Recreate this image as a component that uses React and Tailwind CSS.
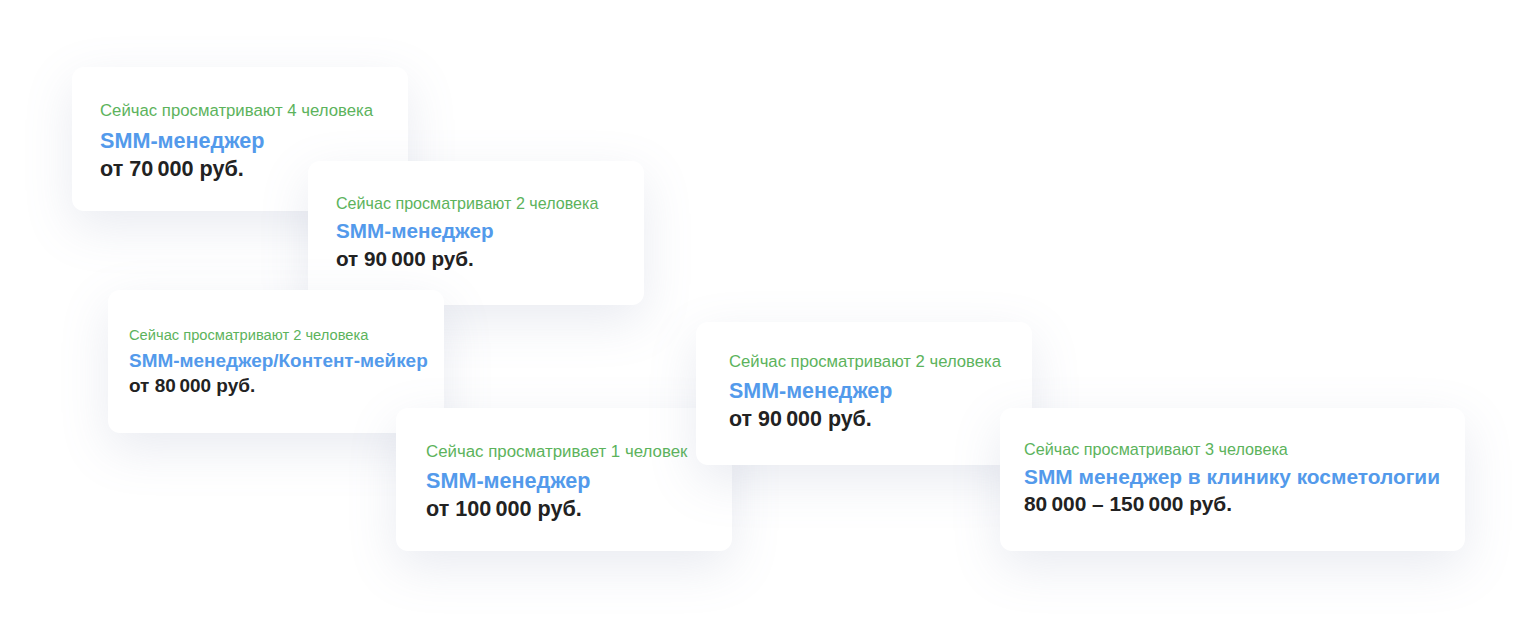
import React from "react";

const font = { fontFamily: '"Liberation Sans", Arial, sans-serif' };
const T = "\u2009";

function Card({ pos, pad, green, blue, black, gCls, bCls, kCls }) {
  return (
    <div
      className={`absolute flex flex-col rounded-[12px] bg-white shadow-[0_16px_50px_rgba(120,130,165,0.16)] ${pos} ${pad}`}
    >
      <div className={`text-[#5cb35c] whitespace-nowrap ${gCls}`}>{green}</div>
      <div className={`font-bold text-[#539aeb] whitespace-nowrap ${bCls}`}>{blue}</div>
      <div className={`font-bold text-[#222222] whitespace-nowrap ${kCls}`}>{black}</div>
    </div>
  );
}

export default function App() {
  return (
    <div className="relative w-[1538px] h-[630px] overflow-hidden bg-white" style={font}>
      <Card
        pos="left-[72px] top-[67px] w-[336px] h-[144px]"
        pad="pl-[28px] pt-[34px]"
        green="Сейчас просматривают 4 человека"
        blue="SMM-менеджер"
        black={`от 70${T}000 руб.`}
        gCls="text-[16.75px] leading-[20px]"
        bCls="mt-[6px] text-[21.6px] leading-[28px]"
        kCls="text-[21.6px] leading-[28px]"
      />
      <Card
        pos="left-[308px] top-[161px] w-[336px] h-[144px]"
        pad="pl-[28px] pt-[32px]"
        green="Сейчас просматривают 2 человека"
        blue="SMM-менеджер"
        black={`от 90${T}000 руб.`}
        gCls="text-[16.1px] leading-[20px]"
        bCls="mt-[4px] text-[20.7px] leading-[28px]"
        kCls="text-[20.7px] leading-[28px]"
      />
      <Card
        pos="left-[108px] top-[290px] w-[336px] h-[143px]"
        pad="pl-[21px] pt-[36px]"
        green="Сейчас просматривают 2 человека"
        blue="SMM-менеджер/Контент-мейкер"
        black={`от 80${T}000 руб.`}
        gCls="text-[14.7px] leading-[18px]"
        bCls="mt-[4px] text-[18.95px] leading-[25px]"
        kCls="text-[18.95px] leading-[25px]"
      />
      <Card
        pos="left-[396px] top-[408px] w-[336px] h-[143px]"
        pad="pl-[30px] pt-[34px]"
        green="Сейчас просматривает 1 человек"
        blue="SMM-менеджер"
        black={`от 100${T}000 руб.`}
        gCls="text-[16.85px] leading-[20px]"
        bCls="mt-[5px] text-[21.6px] leading-[28px]"
        kCls="text-[21.6px] leading-[28px]"
      />
      <Card
        pos="left-[696px] top-[322px] w-[336px] h-[143px]"
        pad="pl-[33px] pt-[30px]"
        green="Сейчас просматривают 2 человека"
        blue="SMM-менеджер"
        black={`от 90${T}000 руб.`}
        gCls="text-[16.7px] leading-[20px]"
        bCls="mt-[5px] text-[21.45px] leading-[28px]"
        kCls="text-[21.45px] leading-[28px]"
      />
      <Card
        pos="left-[1000px] top-[408px] w-[465px] h-[143px]"
        pad="pl-[24px] pt-[31px]"
        green="Сейчас просматривают 3 человека"
        blue="SMM менеджер в клинику косметологии"
        black={`80${T}000 – 150${T}000 руб.`}
        gCls="text-[16.2px] leading-[20px]"
        bCls="mt-[4px] text-[20.9px] leading-[27px]"
        kCls="text-[20.9px] leading-[27px]"
      />
    </div>
  );
}
